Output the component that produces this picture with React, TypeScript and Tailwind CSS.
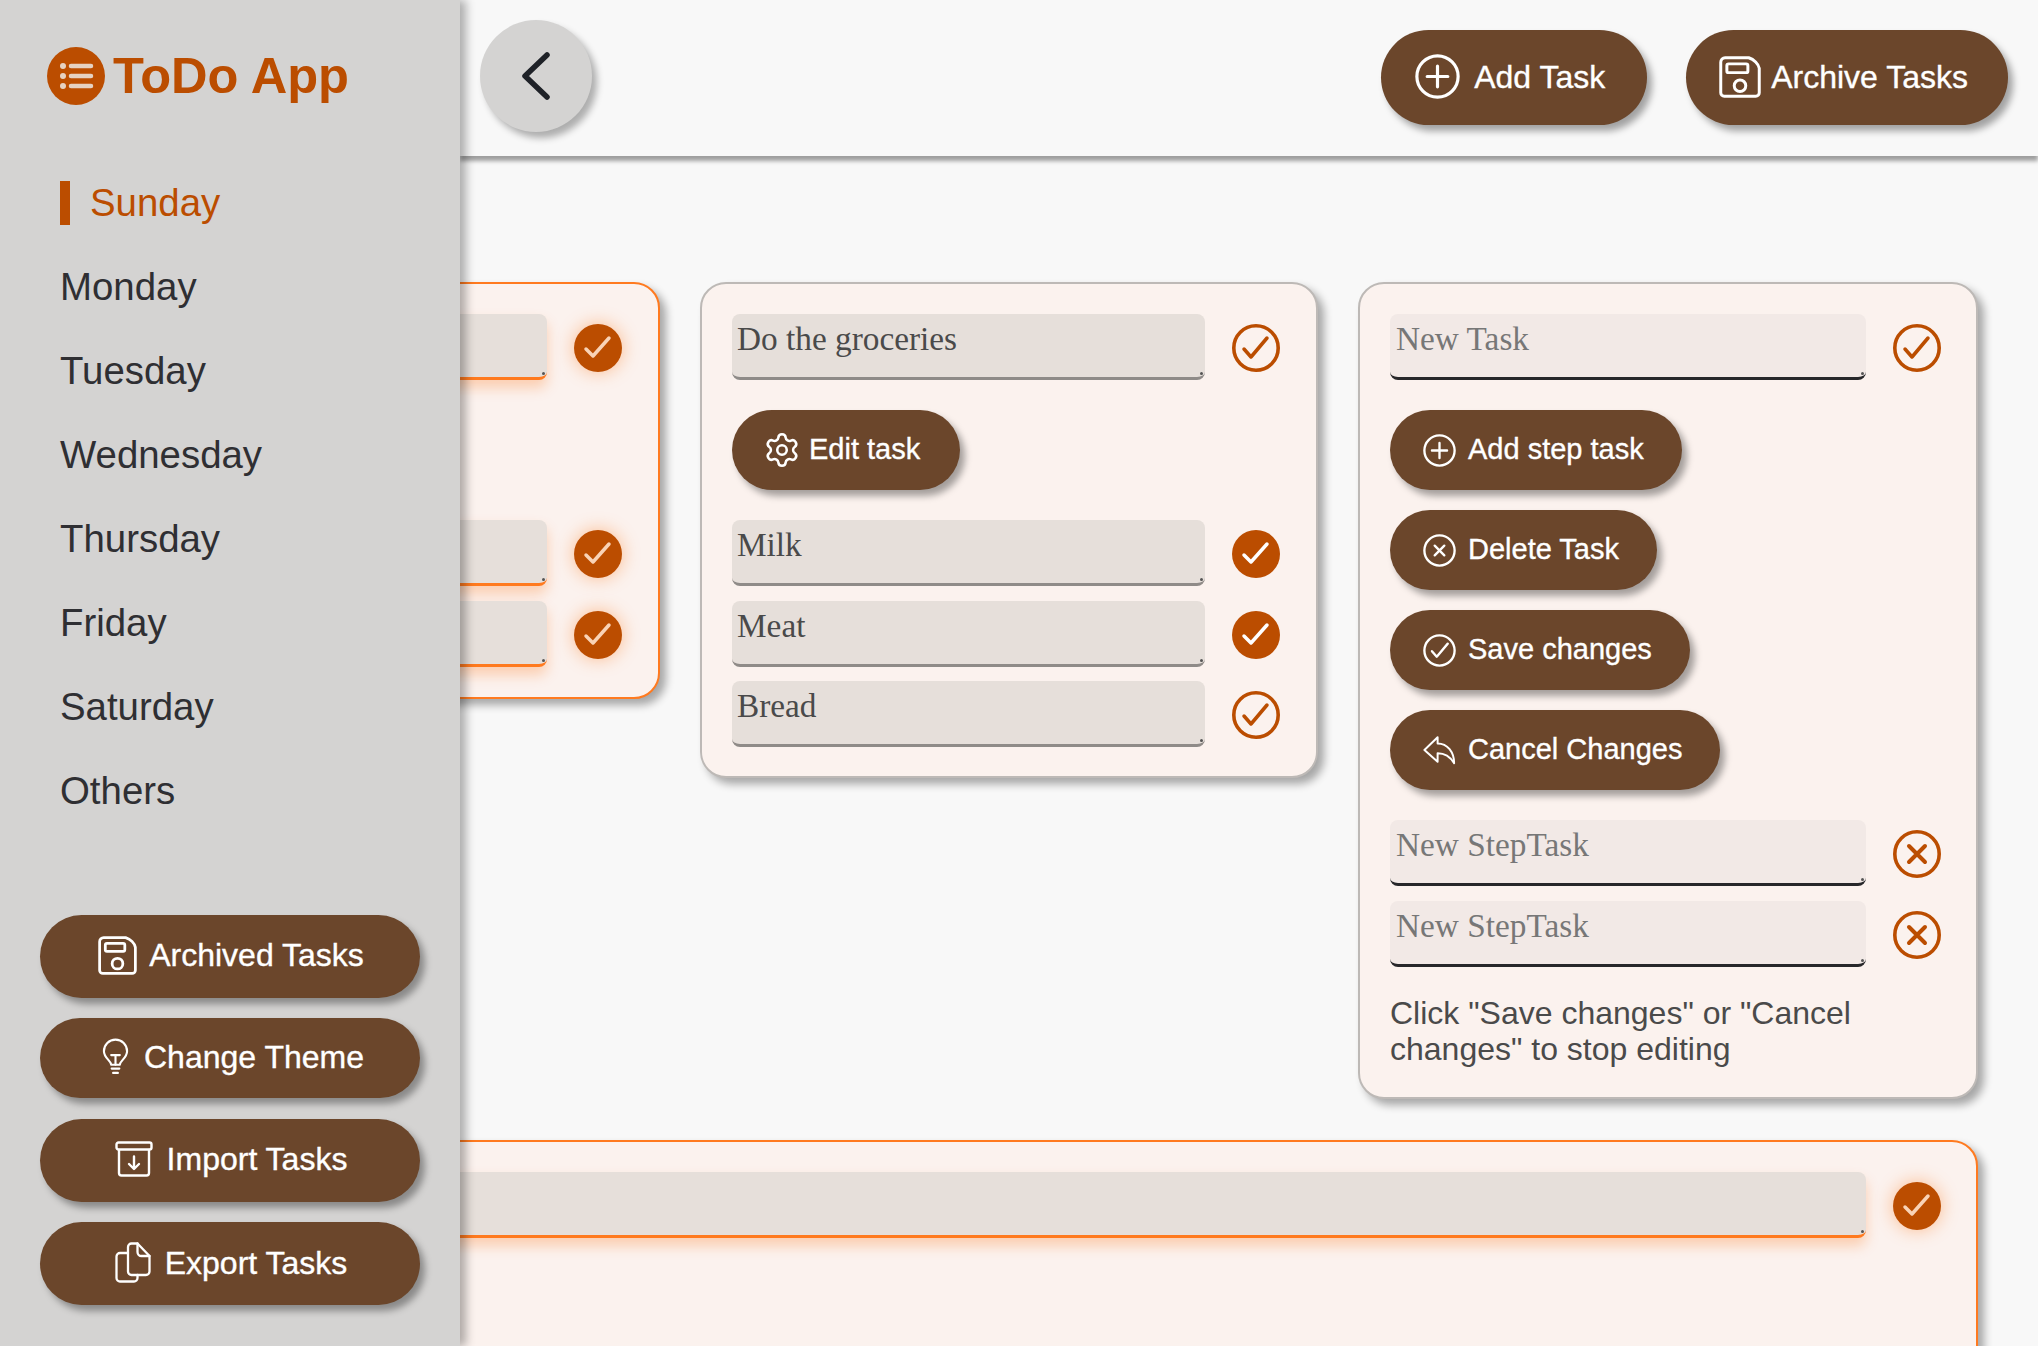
import React from 'react';
import { Settings } from 'lucide-react';

const CheckIcon = ({ filled = false, glow = false }: { filled?: boolean; glow?: boolean }) => (
  <svg viewBox="0 0 48 48" className="w-12 h-12 shrink-0 mt-[2px] overflow-visible">
    {filled ? (
      <>
        <circle cx="24" cy="24" r="24" fill="#bb4d00" className={glow ? 'drop-shadow-[0_0_9px_rgba(255,105,0,0.4)]' : ''} />
        <path d="M12 25 L19 32 L35 14" fill="none" stroke={glow ? '#f9d3b6' : '#ffffff'} strokeWidth="3.500" strokeLinecap="round" strokeLinejoin="round" />
      </>
    ) : (
      <>
        <circle cx="24" cy="24" r="22.200" fill="none" stroke="#bb4d00" strokeWidth="3.600" />
        <path d="M12 25 L19 33 L35 14" fill="none" stroke="#bb4d00" strokeWidth="3.500" strokeLinecap="round" strokeLinejoin="round" />
      </>
    )}
  </svg>
);

const RemoveIcon = () => (
  <svg viewBox="0 0 48 48" className="w-12 h-12 shrink-0 mt-[2px]">
    <circle cx="24" cy="24" r="22.200" fill="none" stroke="#bb4d00" strokeWidth="3.600" />
    <path d="M16 16 L32 32 M32 16 L16 32" fill="none" stroke="#bb4d00" strokeWidth="4" strokeLinecap="round" />
  </svg>
);

// stroked white icons used in the brown pills
const Line = ({ className, vb = '0 0 24 24', sw = 1.7, children }: { className: string; vb?: string; sw?: number; children: React.ReactNode }) => (
  <svg viewBox={vb} className={`${className} shrink-0`} fill="none" stroke="#fff" strokeWidth={sw} strokeLinecap="round" strokeLinejoin="round">
    {children}
  </svg>
);

const PlusCircle = ({ className }: { className: string }) => (
  <Line className={className}>
    <circle cx="12" cy="12" r="11" />
    <path d="M12 6.500v11M6.500 12h11" />
  </Line>
);

const CrossCircle = ({ className }: { className: string }) => (
  <Line className={className}>
    <circle cx="12" cy="12" r="11" />
    <path d="M8.500 8.500l7 7M15.500 8.500l-7 7" />
  </Line>
);

const TickCircle = ({ className }: { className: string }) => (
  <Line className={className}>
    <circle cx="12" cy="12" r="11" />
    <path d="M6.500 12.500l3.500 4 8-9.500" />
  </Line>
);

const Floppy = ({ className }: { className: string }) => (
  <Line className={className} sw={1.700}>
    <path d="M3.500 1h13.500c3 1 5.500 3.500 6 6v14a2 2 0 0 1-2 2H3a2 2 0 0 1-2-2V3.500A2.500 2.500 0 0 1 3.500 1z" />
    <rect x="4.500" y="4.500" width="12" height="5" rx="1" />
    <circle cx="12" cy="17" r="3.300" />
  </Line>
);

const Bulb = ({ className }: { className: string }) => (
  <Line className={className} vb="0 0 28 38" sw={2.200}>
    <path d="M9.500 27c0-4-7.500-7-7.500-14a12 12 0 0 1 24 0c0 7-7.500 10-7.500 14z" />
    <path d="M9.500 17h9M14 17v10M10 31h8M11.500 35.500h5" />
  </Line>
);

const ImportBox = ({ className }: { className: string }) => (
  <Line className={className} vb="0 0 38 36" sw={2.400}>
    <rect x="1.500" y="1.500" width="35" height="7" rx="2" />
    <path d="M4 9v23a2.500 2.500 0 0 0 2.500 2.500h25A2.500 2.500 0 0 0 34 32V9" />
    <path d="M19 15.500v12M14 23l5 5 5-5" />
  </Line>
);

const ExportDocs = ({ className }: { className: string }) => (
  <Line className={className} vb="0 0 36 41" sw={2.300}>
    <path d="M13 11H5a3.500 3.500 0 0 0-3.500 3.500V36A3.500 3.500 0 0 0 5 39.500h14a3.500 3.500 0 0 0 3.500-3.500v-3" />
    <path d="M13 29.500V5a3.500 3.500 0 0 1 3.500-3.500h6L34.500 14v15.500A3.500 3.500 0 0 1 31 33H16.500A3.500 3.500 0 0 1 13 29.500z" />
    <path d="M22.500 1.500V10a4 4 0 0 0 4 4h8" />
  </Line>
);

const ReplyArrow = ({ className }: { className: string }) => (
  <Line className={className} vb="0 0 35 31" sw={2.100}>
    <path d="M15.500 2L1.500 15.500 15.500 28v-9c8 0 13.500 4 17.500 10.500C33 18 26 8.500 15.500 8.500z" />
  </Line>
);

const Pill = ({ className, children }: { className: string; children: React.ReactNode }) => (
  <button className={`flex items-center rounded-full bg-[#6b462b] text-white [-webkit-text-stroke:0.35px_white] shadow-[5px_6px_7px_rgba(0,0,0,0.35)] ${className}`}>
    {children}
  </button>
);

const TaskInput = ({ text, tone = 'plain', dim = false }: { text?: string; tone?: 'plain' | 'done' | 'fresh'; dim?: boolean }) => {
  const look =
    tone === 'done'
      ? 'bg-[#e6dfda] border-[#ff7a1f] shadow-[0_8px_13px_rgba(255,105,0,0.26)]'
      : tone === 'fresh'
        ? 'bg-[#f2e9e6] border-[#27272a]'
        : 'bg-[#e6dfda] border-[#8f8b88]';
  return (
    <div className={`relative flex-1 h-[66px] rounded-lg border-b-[3px] pt-[6px] font-['Liberation_Serif',serif] text-[33.300px] leading-[38px] ${look} ${dim ? 'pl-[6px] text-[#777777]' : 'pl-[5px] text-[#4a4a4a]'}`}>
      {text}
      <span className="absolute right-[2px] bottom-[2px] w-[3px] h-[3px] rounded-full bg-[#555555]"></span>
    </div>
  );
};

const TaskRow = ({ text, tone, dim, checked, remove }: { text?: string; tone?: 'plain' | 'done' | 'fresh'; dim?: boolean; checked?: boolean; remove?: boolean }) => (
  <div className="flex items-center gap-[27px]">
    <TaskInput text={text} tone={tone} dim={dim} />
    {remove ? <RemoveIcon /> : <CheckIcon filled={checked} glow={tone === 'done'} />}
  </div>
);

const days = ['Sunday', 'Monday', 'Tuesday', 'Wednesday', 'Thursday', 'Friday', 'Saturday', 'Others'];

export default function App() {
  return (
    <div className="relative w-full h-[1346px] overflow-hidden bg-[#f8f8f8] font-['Liberation_Sans',sans-serif]">
      {/* Sidebar lies over the task grid */}
      <aside className="absolute left-0 top-0 bottom-0 z-20 w-[460px] flex flex-col bg-[#d4d3d2] shadow-[6px_0_9px_rgba(0,0,0,0.3)] pb-[41px]">
        <div className="flex items-center gap-[8px] pl-[47px] pt-[47px]">
          <svg viewBox="0 0 58 58" className="w-[58px] h-[58px] shrink-0">
            <circle cx="29" cy="29" r="29" fill="#bb4d00" />
            <path d="M24 19h20M24 29h20M24 39h20" stroke="#e6d2c2" strokeWidth="4.500" strokeLinecap="round" />
            <circle cx="16" cy="19" r="3" fill="#e6d2c2" />
            <circle cx="16" cy="29" r="3" fill="#e6d2c2" />
            <circle cx="16" cy="39" r="3" fill="#e6d2c2" />
          </svg>
          <span className="text-[50.600px] leading-[58px] font-bold text-[#bb4d00]">ToDo App</span>
        </div>

        <nav className="mt-[56px] pl-[60px] flex flex-col">
          {days.map((day, idx) => (
            <div key={day} className="h-[84px] flex items-center text-[38.400px]">
              {idx === 0 ? (
                <>
                  <span className="w-[10px] h-[44px] bg-[#bb4d00] mr-[20px]"></span>
                  <span className="text-[#bb4d00]">{day}</span>
                </>
              ) : (
                <span className="text-[#2f2f33]">{day}</span>
              )}
            </div>
          ))}
        </nav>

        <div className="mt-auto px-[40px] flex flex-col gap-[20.500px] text-[32px]">
          <Pill className="h-[83px] justify-center gap-[12px] pl-[2px] pb-[2px]">
            <Floppy className="w-[39px] h-[39px]" />
            Archived Tasks
          </Pill>
          <Pill className="h-[80px] justify-center gap-[15px] pl-[6px] pb-[2px]">
            <Bulb className="w-[27px] h-[38px]" />
            Change Theme
          </Pill>
          <Pill className="h-[83px] justify-center gap-[14px] pl-[2px] pb-[2px]">
            <ImportBox className="w-[38px] h-[36px]" />
            Import Tasks
          </Pill>
          <Pill className="h-[83px] justify-center gap-[14px] pl-[2px] pb-[2px]">
            <ExportDocs className="w-[36px] h-[41px]" />
            Export Tasks
          </Pill>
        </div>
      </aside>

      {/* Top bar */}
      <header className="ml-[460px] h-[156px] flex items-start justify-between pl-[20px] pr-[30px] shadow-[0_5px_4px_rgba(0,0,0,0.36)] bg-[#f8f8f8]">
        <button className="mt-[20px] w-[112px] h-[112px] rounded-full bg-[#d4d3d2] flex items-center justify-center shadow-[5px_6px_7px_rgba(0,0,0,0.3)]">
          <svg viewBox="0 0 30 48" className="w-[30px] h-[48px]">
            <path d="M26 3 L4 24 L26 45" fill="none" stroke="#1f2228" strokeWidth="5.500" strokeLinecap="round" strokeLinejoin="round" />
          </svg>
        </button>
        <div className="mt-[30px] flex gap-[39px] text-[32px]">
          <Pill className="h-[95px] pl-[34px] pr-[42px] pb-[2px] gap-[14px]">
            <PlusCircle className="w-[45px] h-[45px]" />
            Add Task
          </Pill>
          <Pill className="h-[95px] pl-[33px] pr-[40px] pb-[2px] gap-[10px]">
            <Floppy className="w-[42px] h-[42px]" />
            Archive Tasks
          </Pill>
        </div>
      </header>

      {/* Task cards, first column slides under the sidebar */}
      <main className="pl-[42px] pt-[126px] grid grid-cols-[618px_618px_620px] gap-x-[40px] gap-y-[41px] items-start">
        <section className="rounded-[26px] border-2 border-[#ff7a1f] bg-[#fbf2ee] shadow-[6px_6px_9px_rgba(0,0,0,0.33)] pl-[30px] pr-[36px] pt-[30px] pb-[30px]">
          <TaskRow tone="done" checked />
          <div className="h-[140px]"></div>
          <div className="flex flex-col gap-[14.500px]">
            <TaskRow tone="done" checked />
            <TaskRow tone="done" checked />
          </div>
        </section>

        <section className="rounded-[26px] border-2 border-[#bdb9b6] bg-[#fbf2ee] shadow-[6px_6px_9px_rgba(0,0,0,0.33)] pl-[30px] pr-[36px] pt-[30px] pb-[29px]">
          <TaskRow text="Do the groceries" />
          <Pill className="mt-[30px] h-[80px] pl-[31px] pr-[40px] gap-[8px] text-[29px]">
            <Settings className="w-[38px] h-[38px]" strokeWidth={1.600} />
            Edit task
          </Pill>
          <div className="mt-[30px] flex flex-col gap-[14.500px]">
            <TaskRow text="Milk" checked />
            <TaskRow text="Meat" checked />
            <TaskRow text="Bread" />
          </div>
        </section>

        <section className="rounded-[26px] border-2 border-[#bdb9b6] bg-[#fbf2ee] shadow-[6px_6px_9px_rgba(0,0,0,0.33)] pl-[30px] pr-[35px] pt-[30px] pb-[30px]">
          <TaskRow text="New Task" tone="fresh" dim />
          <div className="mt-[30px] flex flex-col items-start gap-[20px] text-[29px]">
            <Pill className="h-[80px] pl-[33px] pr-[38px] gap-[12px]">
              <PlusCircle className="w-[33px] h-[33px]" />
              Add step task
            </Pill>
            <Pill className="h-[80px] pl-[33px] pr-[38px] gap-[12px]">
              <CrossCircle className="w-[33px] h-[33px]" />
              Delete Task
            </Pill>
            <Pill className="h-[80px] pl-[33px] pr-[38px] gap-[12px]">
              <TickCircle className="w-[33px] h-[33px]" />
              Save changes
            </Pill>
            <Pill className="h-[80px] pl-[33px] pr-[38px] gap-[12px]">
              <ReplyArrow className="w-[33px] h-[30px]" />
              Cancel Changes
            </Pill>
          </div>
          <div className="mt-[30px] flex flex-col gap-[14.500px]">
            <TaskRow text="New StepTask" tone="fresh" dim remove />
            <TaskRow text="New StepTask" tone="fresh" dim remove />
          </div>
          <p className="mt-[28px] text-[32px] leading-[36px] text-[#4a4a4a]">
            Click "Save changes" or "Cancel changes" to stop editing
          </p>
        </section>

        <section className="col-span-3 h-[300px] rounded-[26px] border-2 border-[#ff7a1f] bg-[#fbf2ee] shadow-[6px_6px_9px_rgba(0,0,0,0.33)] pl-[30px] pr-[35px] pt-[30px]">
          <TaskRow tone="done" checked />
        </section>
      </main>
    </div>
  );
}
